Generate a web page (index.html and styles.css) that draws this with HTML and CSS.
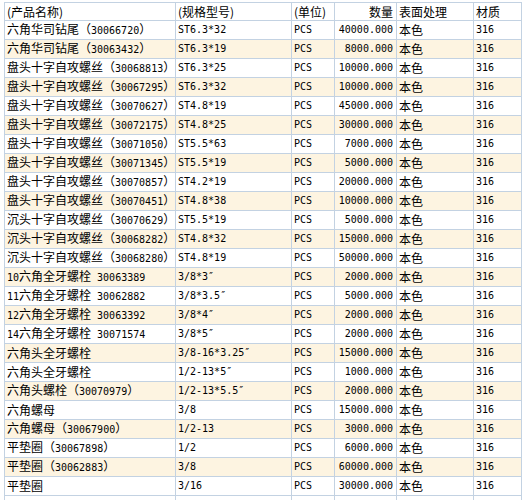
FILE: index.html
```html
<!DOCTYPE html>
<html>
<head>
<meta charset="utf-8">
<link rel="stylesheet" href="styles.css">
</head>
<body>
<table class="grid">
<colgroup>
<col class="c-name"><col class="c-spec"><col class="c-unit"><col class="c-qty"><col class="c-fin"><col class="c-mat">
</colgroup>
<thead>
<tr><th>(产品名称)</th><th>(规格型号)</th><th>(单位)</th><th class="r">数量</th><th>表面处理</th><th>材质</th></tr>
</thead>
<tbody>
<tr><td>六角华司钻尾（<span class="m">30066720</span>）</td><td class="m">ST6.3*32</td><td class="m">PCS</td><td class="m r">40000.000</td><td>本色</td><td class="m">316</td></tr>
<tr><td>六角华司钻尾（<span class="m">30063432</span>）</td><td class="m">ST6.3*19</td><td class="m">PCS</td><td class="m r">8000.000</td><td>本色</td><td class="m">316</td></tr>
<tr><td>盘头十字自攻螺丝（<span class="m">30068813</span>）</td><td class="m">ST6.3*25</td><td class="m">PCS</td><td class="m r">10000.000</td><td>本色</td><td class="m">316</td></tr>
<tr><td>盘头十字自攻螺丝（<span class="m">30067295</span>）</td><td class="m">ST6.3*32</td><td class="m">PCS</td><td class="m r">10000.000</td><td>本色</td><td class="m">316</td></tr>
<tr><td>盘头十字自攻螺丝（<span class="m">30070627</span>）</td><td class="m">ST4.8*19</td><td class="m">PCS</td><td class="m r">45000.000</td><td>本色</td><td class="m">316</td></tr>
<tr><td>盘头十字自攻螺丝（<span class="m">30072175</span>）</td><td class="m">ST4.8*25</td><td class="m">PCS</td><td class="m r">30000.000</td><td>本色</td><td class="m">316</td></tr>
<tr><td>盘头十字自攻螺丝（<span class="m">30071050</span>）</td><td class="m">ST5.5*63</td><td class="m">PCS</td><td class="m r">7000.000</td><td>本色</td><td class="m">316</td></tr>
<tr><td>盘头十字自攻螺丝（<span class="m">30071345</span>）</td><td class="m">ST5.5*19</td><td class="m">PCS</td><td class="m r">5000.000</td><td>本色</td><td class="m">316</td></tr>
<tr><td>盘头十字自攻螺丝（<span class="m">30070857</span>）</td><td class="m">ST4.2*19</td><td class="m">PCS</td><td class="m r">20000.000</td><td>本色</td><td class="m">316</td></tr>
<tr><td>盘头十字自攻螺丝（<span class="m">30070451</span>）</td><td class="m">ST4.8*38</td><td class="m">PCS</td><td class="m r">10000.000</td><td>本色</td><td class="m">316</td></tr>
<tr><td>沉头十字自攻螺丝（<span class="m">30070629</span>）</td><td class="m">ST5.5*19</td><td class="m">PCS</td><td class="m r">5000.000</td><td>本色</td><td class="m">316</td></tr>
<tr><td>沉头十字自攻螺丝（<span class="m">30068282</span>）</td><td class="m">ST4.8*32</td><td class="m">PCS</td><td class="m r">15000.000</td><td>本色</td><td class="m">316</td></tr>
<tr><td>沉头十字自攻螺丝（<span class="m">30068280</span>）</td><td class="m">ST4.8*19</td><td class="m">PCS</td><td class="m r">50000.000</td><td>本色</td><td class="m">316</td></tr>
<tr><td><span class="m">10</span>六角全牙螺栓<span class="m"> 30063389</span></td><td class="m">3/8*3″</td><td class="m">PCS</td><td class="m r">2000.000</td><td>本色</td><td class="m">316</td></tr>
<tr><td><span class="m">11</span>六角全牙螺栓<span class="m"> 30062882</span></td><td class="m">3/8*3.5″</td><td class="m">PCS</td><td class="m r">5000.000</td><td>本色</td><td class="m">316</td></tr>
<tr><td><span class="m">12</span>六角全牙螺栓<span class="m"> 30063392</span></td><td class="m">3/8*4″</td><td class="m">PCS</td><td class="m r">2000.000</td><td>本色</td><td class="m">316</td></tr>
<tr><td><span class="m">14</span>六角全牙螺栓<span class="m"> 30071574</span></td><td class="m">3/8*5″</td><td class="m">PCS</td><td class="m r">2000.000</td><td>本色</td><td class="m">316</td></tr>
<tr><td>六角头全牙螺栓</td><td class="m">3/8-16*3.25″</td><td class="m">PCS</td><td class="m r">15000.000</td><td>本色</td><td class="m">316</td></tr>
<tr><td>六角头全牙螺栓</td><td class="m">1/2-13*5″</td><td class="m">PCS</td><td class="m r">1000.000</td><td>本色</td><td class="m">316</td></tr>
<tr><td>六角头螺栓（<span class="m">30070979</span>）</td><td class="m">1/2-13*5.5″</td><td class="m">PCS</td><td class="m r">2000.000</td><td>本色</td><td class="m">316</td></tr>
<tr><td>六角螺母</td><td class="m">3/8</td><td class="m">PCS</td><td class="m r">15000.000</td><td>本色</td><td class="m">316</td></tr>
<tr><td>六角螺母（<span class="m">30067900</span>）</td><td class="m">1/2-13</td><td class="m">PCS</td><td class="m r">3000.000</td><td>本色</td><td class="m">316</td></tr>
<tr><td>平垫圈（<span class="m">30067898</span>）</td><td class="m">1/2</td><td class="m">PCS</td><td class="m r">6000.000</td><td>本色</td><td class="m">316</td></tr>
<tr><td>平垫圈（<span class="m">30062883</span>）</td><td class="m">3/8</td><td class="m">PCS</td><td class="m r">60000.000</td><td>本色</td><td class="m">316</td></tr>
<tr><td>平垫圈</td><td class="m">3/16</td><td class="m">PCS</td><td class="m r">30000.000</td><td>本色</td><td class="m">316</td></tr>
<tr class="blank"><td></td><td></td><td></td><td></td><td></td><td></td></tr>
</tbody>
</table>
</body>
</html>
```

FILE: styles.css
```css
html, body {
  margin: 0;
  padding: 0;
  background: #ffffff;
  overflow: hidden;
}

.grid {
  margin: 2px 0 0 4px;
  border-collapse: collapse;
  table-layout: fixed;
  width: 517px;
  font-family: "Noto Sans CJK SC", "Noto Sans", sans-serif;
  font-size: 12px;
  color: #000000;
}

.c-name { width: 171px; }
.c-spec { width: 116px; }
.c-unit { width: 43px; }
.c-qty { width: 62px; }
.c-fin { width: 77px; }
.c-mat { width: 48px; }

.grid th,
.grid td {
  border: 1px solid #c3d2e2;
  padding: 0 2px 0 2px;
  white-space: nowrap;
  overflow: hidden;
  text-align: left;
  vertical-align: middle;
  line-height: 14px;
}

.grid th {
  font-weight: normal;
  height: 17px;
  background: #ffffff;
}

.grid td {
  height: 18px;
}

.grid tbody tr:nth-child(even) td {
  background: #fdf4e1;
}

.grid tbody tr.blank td {
  background: #ffffff;
}

.grid .r {
  text-align: right;
  padding-right: 3px;
}

.m {
  font-family: "DejaVu Sans Mono", "Liberation Mono", monospace;
  font-size: 10px;
}
```
